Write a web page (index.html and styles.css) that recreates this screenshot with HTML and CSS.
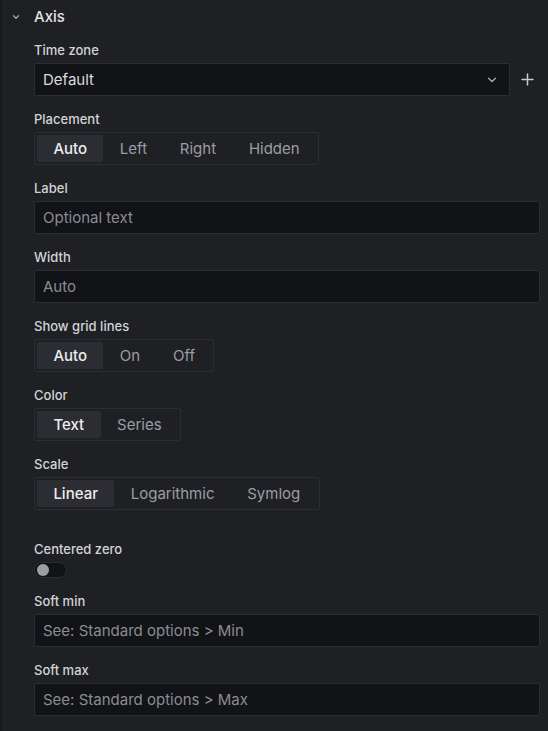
FILE: index.html
```html
<!DOCTYPE html>
<html lang="en">
<head>
<meta charset="utf-8">
<title>Axis options</title>
<link rel="stylesheet" href="styles.css">
</head>
<body>
<div class="pane">
  <div class="section-header">
    <span class="caret">
      <svg width="8" height="8" viewBox="0 0 8 8"><path d="M1.5 2.8 L4 5.2 L6.5 2.8" fill="none" stroke="#a6a7ad" stroke-width="1.3" stroke-linecap="round" stroke-linejoin="round"/></svg>
    </span>
    <span class="section-title">Axis</span>
  </div>
  <div class="section-body">
    <div class="field">
      <div class="label">Time zone</div>
      <div class="row">
        <div class="select">
          <span class="select-value">Default</span>
          <svg class="select-caret" width="10" height="6" viewBox="0 0 10 6"><path d="M1.5 1.2 L5 4.6 L8.5 1.2" fill="none" stroke="#a6a7ad" stroke-width="1.4" stroke-linecap="round" stroke-linejoin="round"/></svg>
        </div>
        <span class="add">
          <svg width="13" height="13" viewBox="0 0 13 13"><path d="M6.5 1 V12 M1 6.5 H12" stroke="#c8c9ce" stroke-width="1.5" stroke-linecap="round"/></svg>
        </span>
      </div>
    </div>

    <div class="field">
      <div class="label">Placement</div>
      <div class="radio-group">
        <span class="radio active">Auto</span>
        <span class="radio">Left</span>
        <span class="radio">Right</span>
        <span class="radio">Hidden</span>
      </div>
    </div>

    <div class="field">
      <div class="label">Label</div>
      <div class="input"><span class="placeholder">Optional text</span></div>
    </div>

    <div class="field">
      <div class="label">Width</div>
      <div class="input"><span class="placeholder">Auto</span></div>
    </div>

    <div class="field">
      <div class="label">Show grid lines</div>
      <div class="radio-group">
        <span class="radio active">Auto</span>
        <span class="radio">On</span>
        <span class="radio">Off</span>
      </div>
    </div>

    <div class="field">
      <div class="label">Color</div>
      <div class="radio-group">
        <span class="radio active">Text</span>
        <span class="radio">Series</span>
      </div>
    </div>

    <div class="field">
      <div class="label">Scale</div>
      <div class="radio-group">
        <span class="radio active">Linear</span>
        <span class="radio">Logarithmic</span>
        <span class="radio">Symlog</span>
      </div>
    </div>

    <div class="field field-spaced">
      <div class="label">Centered zero</div>
      <div class="switch"><span class="knob"></span></div>
    </div>

    <div class="field">
      <div class="label">Soft min</div>
      <div class="input"><span class="placeholder">See: Standard options &gt; Min</span></div>
    </div>

    <div class="field">
      <div class="label">Soft max</div>
      <div class="input"><span class="placeholder">See: Standard options &gt; Max</span></div>
    </div>
  </div>
</div>
</body>
</html>
```

FILE: styles.css
```css
html, body {
  margin: 0;
  padding: 0;
  background: #1f2024;
}

body {
  font-family: Inter, "Noto Sans", "Liberation Sans", sans-serif;
  color: #d8d9dd;
  width: 548px;
  height: 731px;
  overflow: hidden;
}

.pane {
  height: 731px;
  box-sizing: border-box;
  border-left: 2px solid #19191d;
}

.section-header {
  display: flex;
  align-items: center;
  height: 20px;
  padding-top: 7px;
}

.caret {
  display: flex;
  width: 8px;
  height: 8px;
  margin-left: 10px;
  margin-right: 14px;
}

.section-title {
  font-size: 15px;
  font-weight: 500;
  color: #e2e3e6;
  line-height: 20px;
}

.section-body {
  padding: 15px 8px 0 32px;
}

.field {
  margin-bottom: 15px;
}

.field-spaced {
  margin-top: 31px;
}

.label {
  font-size: 13px;
  font-weight: 500;
  line-height: 16px;
  color: #d2d3d7;
  margin-bottom: 5px;
}

.row {
  display: flex;
  align-items: center;
}

.select {
  flex: 1;
  height: 33px;
  box-sizing: border-box;
  background: #121317;
  border: 1px solid #2c2d32;
  border-radius: 2px;
  display: flex;
  align-items: center;
  justify-content: space-between;
  padding: 0 12px 0 8px;
}

.select-value {
  font-size: 15px;
  color: #d8d9dd;
}

.select-caret {
  display: block;
}

.add {
  display: flex;
  width: 19px;
  padding-left: 11px;
}

.input {
  height: 33px;
  box-sizing: border-box;
  background: #121317;
  border: 1px solid #2c2d32;
  border-radius: 2px;
  display: flex;
  align-items: center;
  padding: 0 8px;
}

.placeholder {
  font-size: 15px;
  color: #8b8c92;
}

.radio-group {
  display: inline-flex;
  height: 33px;
  box-sizing: border-box;
  border: 1px solid #2c2d32;
  border-radius: 2px;
  padding: 2px;
}

.radio {
  display: flex;
  align-items: center;
  padding: 0 16.4px;
  font-size: 15px;
  color: #9c9da3;
  border-radius: 2px;
}

.radio.active {
  background: #2c2d32;
  color: #ecedf0;
  font-weight: 500;
}

.switch {
  width: 33px;
  height: 16px;
  box-sizing: border-box;
  background: #121317;
  border: 1px solid #2c2d32;
  border-radius: 8px;
  display: flex;
  align-items: center;
  padding-left: 2px;
}

.knob {
  width: 12px;
  height: 12px;
  border-radius: 50%;
  background: #9d9ea4;
}
```
